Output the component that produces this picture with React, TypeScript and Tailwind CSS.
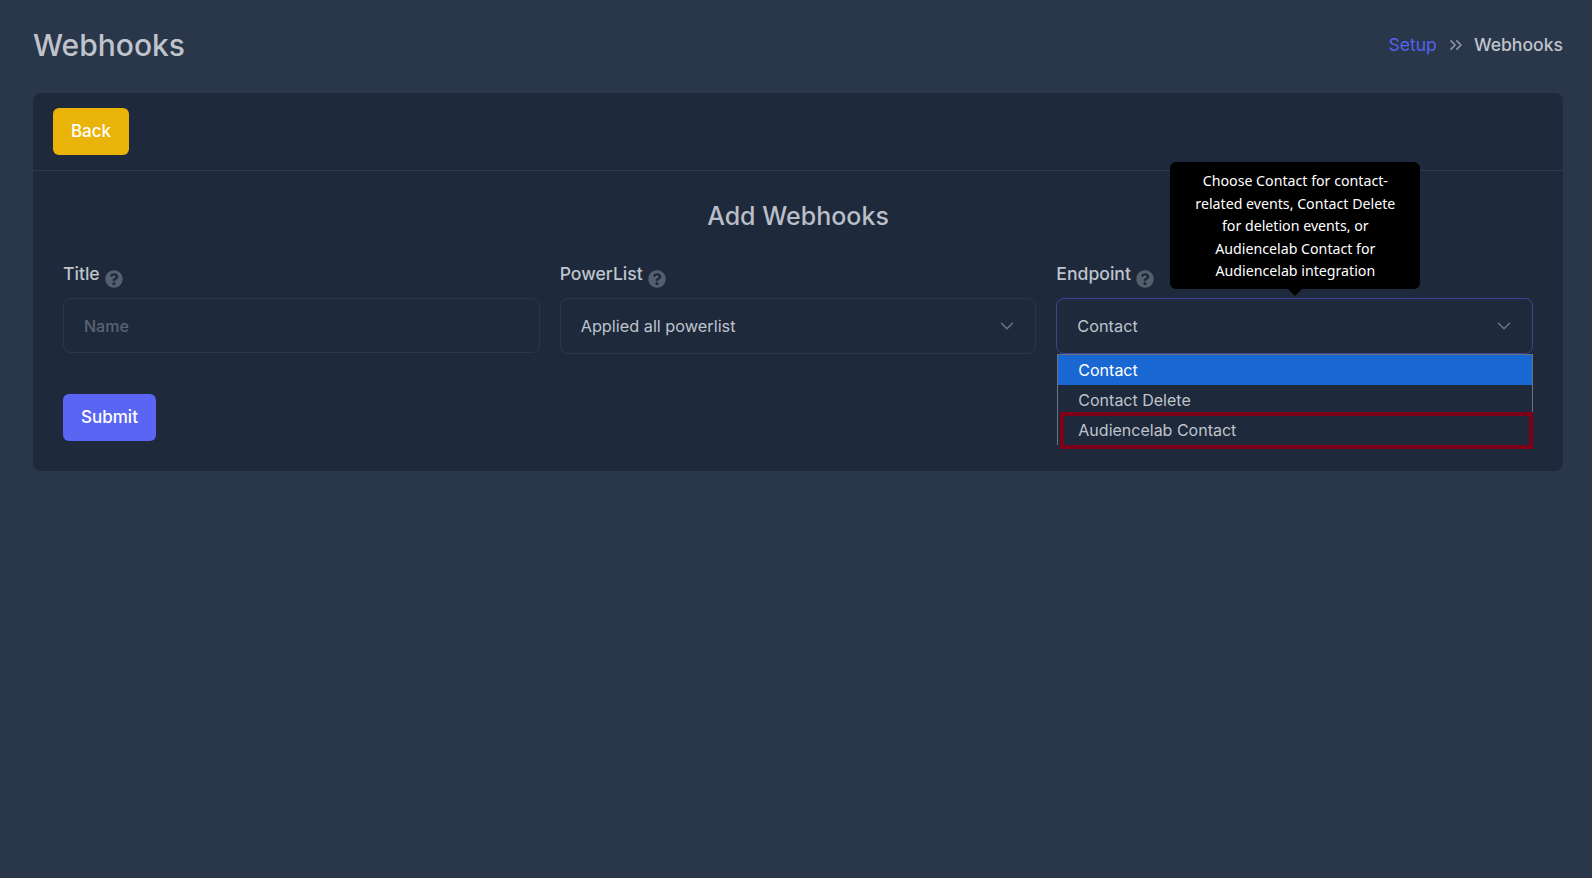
import { ChevronDown, ChevronsRight } from "lucide-react";
import { FaQuestionCircle } from "react-icons/fa";

function Label({ text }: { text: string }) {
  return (
    <div className="mb-[12px] flex h-[24px] items-start text-[17.6px] leading-[24px] font-medium text-[#bfc4cc]">
      <span>{text}</span>
      <FaQuestionCircle className="ml-[5px] mt-[8px] text-[#565f6d]" size={18} />
    </div>
  );
}

function SelectBox({ value, active }: { value: string; active?: boolean }) {
  return (
    <div
      className={`flex h-[56px] items-center justify-between rounded-[8px] border pl-[20px] pr-[17px] text-[16.3px] text-[#bfc4cc] ${
        active ? "border-[#3b4499]" : "border-[#2b3648]"
      }`}
    >
      <span>{value}</span>
      <ChevronDown size={22} strokeWidth={1.75} className="text-[#6b7280]" />
    </div>
  );
}

export default function App() {
  return (
    <div className="min-h-[878px] bg-[#2a3649] pl-[33px] pr-[29px] pt-[25px] pb-[29px] font-['Inter',sans-serif]">
      <div className="mb-[28px] flex h-[40px] items-center justify-between">
        <h1 className="text-[30px] leading-[38px] font-medium text-[#bfc4cc]">Webhooks</h1>
        <div className="flex items-center text-[17.6px] leading-[24px]">
          <span className="text-[#5363f0]">Setup</span>
          <ChevronsRight size={20} strokeWidth={2} className="ml-[9px] mr-[8px] text-[#8a93a1]" />
          <span className="font-medium text-[#bfc4cc]">Webhooks</span>
        </div>
      </div>

      <div className="rounded-[8px] bg-[#1e293b]">
        <div className="border-b border-[#2f3a4d] px-[20px] py-[15px]">
          <button className="block h-[47px] w-[76px] rounded-[6px] bg-[#eab308] text-[17px] font-medium text-white">
            Back
          </button>
        </div>

        <div className="px-[30px] pt-[30px] pb-[30px]">
          <h2 className="mb-[30px] text-center text-[25px] leading-[31px] font-medium text-[#b9bec7]">
            Add Webhooks
          </h2>

          <div className="grid grid-cols-3 gap-[20px]">
            <div>
              <Label text="Title" />
              <div className="flex h-[55px] items-center rounded-[8px] border border-[#2b3648] px-[20px] pt-[1px] text-[16px] font-medium text-[#5b6473]">
                Name
              </div>
            </div>
            <div>
              <Label text="PowerList" />
              <SelectBox value="Applied all powerlist" />
            </div>
            <div className="relative">
              <Label text="Endpoint" />
              <SelectBox value="Contact" active />

              <div className="absolute left-[114px] top-[-100px] w-[250px]">
                <div className="rounded-[6px] bg-black px-[20px] pt-[8px] pb-[6px] text-center font-['Noto_Sans',sans-serif] text-[14.2px] leading-[22.6px] text-white">
                  Choose Contact for contact-related events, Contact Delete for deletion events, or Audiencelab Contact for Audiencelab integration
                </div>
                <div className="mx-auto h-0 w-0 border-x-[7px] border-t-[7px] border-x-transparent border-t-black" />
              </div>

              <div className="absolute left-[1px] right-0 top-[92px] border-x border-t border-[#6b7280] text-[16px] leading-[30px] text-[#bfc4cc]">
                <div className="h-[30px] bg-[#1967d2] pl-[20px] text-white">Contact</div>
                <div className="h-[30px] pl-[20px]">Contact Delete</div>
                <div className="h-[30px] pl-[20px]">Audiencelab Contact</div>
              </div>
              <div className="absolute left-[4px] right-0 top-[150px] h-[37px] border-[4px] border-[#7f0019]" />
            </div>
          </div>

          <button className="mt-[40px] block h-[47px] w-[93px] rounded-[6px] bg-[#5a66f3] text-[17px] font-medium text-white">
            Submit
          </button>
        </div>
      </div>
    </div>
  );
}
